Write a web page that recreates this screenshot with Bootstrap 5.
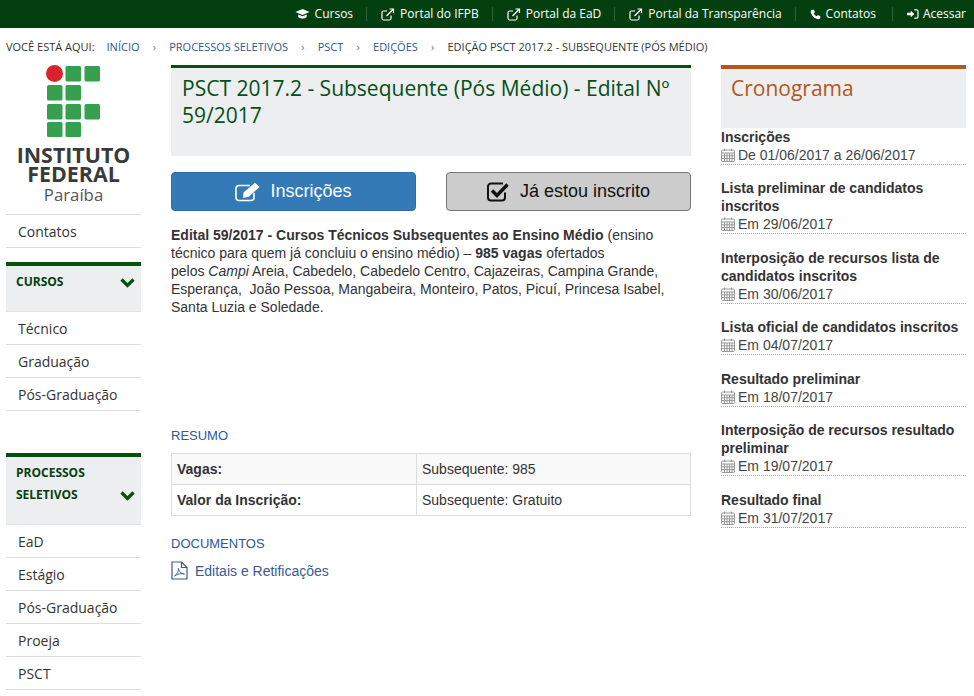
<!DOCTYPE html>
<html lang="pt-BR"><head><meta charset="utf-8"><title>PSCT</title>
<link href="https://cdn.jsdelivr.net/npm/bootstrap@5.3.0/dist/css/bootstrap.min.css" rel="stylesheet">
<style>
html,body{height:696px;overflow:hidden;background:#fff}
body{font-family:"Liberation Sans",Arial,sans-serif;font-size:14px;line-height:18px;color:#333}
.topbar{height:28px;background:#04400f;padding-right:8px}
.topbar a{color:#fff;text-decoration:none;font:12px/14px "Open Sans",sans-serif;padding:0 13px 0 14px;border-right:1px solid #2c6136;display:flex;align-items:center;gap:5px;height:14px}
.topbar a:nth-child(5){padding-right:16px}
.topbar a:last-child{border:0;padding-right:0;padding-left:14px;gap:4px}
.topbar svg{fill:none;stroke:#fff}
.crumbs{height:37px;padding-left:6px;font:11px/37px "Open Sans",sans-serif;color:#333;white-space:nowrap}
.crumbs a{color:#2a5a8c;text-decoration:none}
.crumbs .lbl{margin-right:12px}
.crumbs .sep{color:#777;margin:0 13.200px;font-size:11px}
.frame{padding:0 8px 0 6px;gap:30px}
.lside{width:135px;flex:none}
.mainc{width:520px;flex:none}
.rside{width:245px;flex:none}
.logo{height:149px}
.logo svg{margin-left:40px}
.logo .lg1{font:700 21.4px/19px "Open Sans",sans-serif;color:#3a3a3a;margin-top:8px}
.logo .lg2{font:400 16.800px/20px "Open Sans",sans-serif;color:#555;margin-top:2px}
.sitem{display:block;height:33px;padding-left:12px;border-bottom:1px solid #ddd;color:#333;text-decoration:none;font:14px/34px "Open Sans",sans-serif}
.sitem.first{border-top:1px solid #ddd;height:34px}
.shead{background:#edeeef;border-top:4px solid #04500f;color:#04400f;font:700 12px/22px "Open Sans",sans-serif;padding:5px 6px 0 10px;border-bottom:1px solid #e2e4e4}
.sh1{height:50px;margin-top:14px}
.sh2{height:72px;margin-top:42px}
.chev1{margin-top:6px}
.chev2{margin-top:28px}
.titlebox{height:91px;background:#edeeef;border-top:3px solid #04500f;padding:7px 11px;font:400 21px/27px "Open Sans",sans-serif;color:#04501a;margin:0}
.act{height:39px;width:245px;border-radius:4px;font-size:18px;display:flex;align-items:center;justify-content:center;gap:9px;padding:0}
.act1{background:#337ab7;border:1px solid #2e6da4;color:#fff}
.act2{background:#ccc;border:1px solid #777;color:#111;gap:10px}
.actrow{margin-top:16px}
.intro{margin:15px 0 0}
.lblue{color:#2a5a9c;line-height:18px;font-size:13px}
.lb1{margin-top:111px}
.lb2{margin-top:19px}
.tb{width:520px;font-size:14px;margin:8px 0 0}
.tb td{border:1px solid #ddd;padding:6px 5px;height:31px;line-height:18px;color:#333}
.tb tr:first-child td{background:#f9f9f9}
.tb td:first-child{width:245px;font-weight:700}
.doc{color:#3a5a94;text-decoration:none;gap:7px;margin-top:8px}
.crhead{height:63px;background:#edeeef;border-top:4px solid #b5561c;color:#b5561c;padding:5px 10px;font:400 21px/29px "Open Sans",sans-serif;margin:0}
.ev{border-bottom:1px dotted #aaa;margin-bottom:14.450px}
.ev b{display:block;color:#333}
.ev span{display:flex;align-items:center;gap:3px;color:#444;height:18px}
</style></head><body>
<nav class="topbar d-flex justify-content-end align-items-center">
<a href="#"><svg width="15" height="12" viewBox="0 0 15 12"><path d="M7.500 1 14.500 4 7.500 7 .5 4Z" fill="#fff" stroke="none"/><path d="M3.300 6.500V9C5 11 10 11 11.700 9V6.500L7.500 8.200Z" fill="#fff" stroke="none"/></svg>Cursos</a>
<a href="#"><svg width="14" height="13" viewBox="0 0 14 13" stroke-width="1.200"><path d="M10 7.500V10.500A1.500 1.500 0 0 1 8.500 12H2.500A1.500 1.500 0 0 1 1 10.500V4.500A1.500 1.500 0 0 1 2.500 3H6"/><path d="M5.500 8 12 1.500M8.500 1H12.500V5"/></svg>Portal do IFPB</a>
<a href="#"><svg width="14" height="13" viewBox="0 0 14 13" stroke-width="1.200"><path d="M10 7.500V10.500A1.500 1.500 0 0 1 8.500 12H2.500A1.500 1.500 0 0 1 1 10.500V4.500A1.500 1.500 0 0 1 2.500 3H6"/><path d="M5.500 8 12 1.500M8.500 1H12.500V5"/></svg>Portal da EaD</a>
<a href="#"><svg width="14" height="13" viewBox="0 0 14 13" stroke-width="1.200"><path d="M10 7.500V10.500A1.500 1.500 0 0 1 8.500 12H2.500A1.500 1.500 0 0 1 1 10.500V4.500A1.500 1.500 0 0 1 2.500 3H6"/><path d="M5.500 8 12 1.500M8.500 1H12.500V5"/></svg>Portal da Transparência</a>
<a href="#"><svg width="11" height="11" viewBox="0 0 11 11"><path d="M1.500 1 3.500.5 5 3 3.800 4.300C4.300 5.600 5.400 6.700 6.700 7.200L8 6 10.500 7.500 10 9.500C9.500 10.500 8 10.500 6.500 9.800 4 8.800 2.200 7 1.200 4.500.5 3 .6 1.700 1.500 1Z" fill="#fff" stroke="none"/></svg>Contatos</a>
<a href="#"><svg width="12" height="10" viewBox="0 0 13 11"><path d="M0 4H4V1.800L8 5.500 4 9.200V7H0Z" fill="#fff" stroke="none"/><path d="M8 1H10.500A1.500 1.500 0 0 1 12 2.500V8.500A1.500 1.500 0 0 1 10.500 10H8" stroke-width="1.300"/></svg>Acessar</a>
</nav>
<div class="crumbs"><span class="lbl">VOCÊ ESTÁ AQUI:</span><a href="#">INÍCIO</a><span class="sep">›</span><a href="#">PROCESSOS SELETIVOS</a><span class="sep">›</span><a href="#">PSCT</a><span class="sep">›</span><a href="#">EDIÇÕES</a><span class="sep">›</span>EDIÇÃO PSCT 2017.2 - SUBSEQUENTE (PÓS MÉDIO)</div>
<div class="frame d-flex align-items-start">
<aside class="lside">
<div class="logo text-center">
<svg width="55" height="72" viewBox="0 0 55 72" class="d-block">
<circle cx="8.500" cy="8.500" r="8.500" fill="#d8232a"/>
<g fill="#36a04f"><rect x="19.500" y="1" width="15.500" height="15.500" rx="1.500"/><rect x="38.500" y="1" width="15.500" height="15.500" rx="1.500"/><rect x="1" y="20" width="15.500" height="15.500" rx="1.500"/><rect x="19.500" y="20" width="15.500" height="15.500" rx="1.500"/><rect x="1" y="39" width="15.500" height="15.500" rx="1.500"/><rect x="19.500" y="39" width="15.500" height="15.500" rx="1.500"/><rect x="38.500" y="39" width="15.500" height="15.500" rx="1.500"/><rect x="1" y="57" width="15.500" height="15" rx="1.500"/><rect x="19.500" y="57" width="15.500" height="15" rx="1.500"/></g></svg>
<div class="lg1">INSTITUTO<br>FEDERAL</div><div class="lg2">Paraíba</div>
</div>
<a class="sitem first" href="#">Contatos</a>
<div class="shead sh1 d-flex justify-content-between"><span>CURSOS</span><svg width="15" height="11" viewBox="0 0 15 11" class="chev1"><path d="M1.500 2.500 7.500 8.500 13.500 2.500" fill="none" stroke="#04500f" stroke-width="3.200"/></svg></div>
<a class="sitem" href="#">Técnico</a><a class="sitem" href="#">Graduação</a><a class="sitem" href="#">Pós-Graduação</a>
<div class="shead sh2 d-flex justify-content-between"><span>PROCESSOS<br>SELETIVOS</span><svg width="15" height="11" viewBox="0 0 15 11" class="chev2"><path d="M1.500 2.500 7.500 8.500 13.500 2.500" fill="none" stroke="#04500f" stroke-width="3.200"/></svg></div>
<a class="sitem" href="#">EaD</a><a class="sitem" href="#">Estágio</a><a class="sitem" href="#">Pós-Graduação</a><a class="sitem" href="#">Proeja</a><a class="sitem" href="#">PSCT</a>
</aside>
<main class="mainc">
<h1 class="titlebox">PSCT 2017.2 - Subsequente (Pós Médio) - Edital Nº 59/2017</h1>
<div class="actrow d-flex justify-content-between">
<a class="btn act act1" href="#"><svg width="26" height="20" viewBox="0 0 26 20" fill="none" stroke="#fff" stroke-width="1.600"><path d="M19 11V15.500A3 3 0 0 1 16 18.500H4A3 3 0 0 1 1 15.500V6.500A3 3 0 0 1 4 3.500H15"/><path d="M8.500 10.500 20 .8 24.500 5 13.500 15 8 15.800Z" fill="#fff" stroke="none"/></svg>Inscrições</a>
<a class="btn act act2" href="#"><svg width="23" height="21" viewBox="0 0 23 21" fill="none" stroke="#111" stroke-width="2"><path d="M18 11.500V16.500A3 3 0 0 1 15 19.500H4A3 3 0 0 1 1 16.500V5.500A3 3 0 0 1 4 2.500H16"/><path d="M5 9.500 10 14.500 20.500 3.500" stroke-width="3.400"/></svg>Já estou inscrito</a>
</div>
<p class="intro"><b>Edital 59/2017 - Cursos Técnicos Subsequentes ao Ensino Médio</b> (ensino<br>técnico para quem já concluiu o ensino médio) – <b>985 vagas</b> ofertados<br>pelos <i>Campi</i> Areia, Cabedelo, Cabedelo Centro, Cajazeiras, Campina Grande,<br>Esperança,&nbsp; João Pessoa, Mangabeira, Monteiro, Patos, Picuí, Princesa Isabel,<br>Santa Luzia e Soledade.</p>
<div class="lblue lb1">RESUMO</div>
<table class="tb"><tbody><tr><td>Vagas:</td><td>Subsequente: 985</td></tr><tr><td>Valor da Inscrição:</td><td>Subsequente: Gratuito</td></tr></tbody></table>
<div class="lblue lb2">DOCUMENTOS</div>
<a class="doc d-flex align-items-center" href="#"><svg width="17" height="19" viewBox="0 0 17 19" fill="none" stroke="#3a5a94" stroke-width="1.200"><path d="M1 1H10.500L16 6.500V18H1ZM10.500 1V6.500H16"/><path d="M3.500 15C6 13.500 8 9.500 7.500 7 7 9.500 10 13 13.500 13 11 12 6 13 3.500 15Z" stroke-width=".9"/></svg>Editais e Retificações</a>
</main>
<aside class="rside">
<h2 class="crhead">Cronograma</h2>
<div class="ev"><b>Inscrições</b><span><svg width="14" height="14" viewBox="0 0 14 14"><use href="#cal"/></svg>De 01/06/2017 a 26/06/2017</span></div>
<div class="ev"><b>Lista preliminar de candidatos inscritos</b><span><svg width="14" height="14" viewBox="0 0 14 14"><use href="#cal"/></svg>Em 29/06/2017</span></div>
<div class="ev"><b>Interposição de recursos lista de candidatos inscritos</b><span><svg width="14" height="14" viewBox="0 0 14 14"><use href="#cal"/></svg>Em 30/06/2017</span></div>
<div class="ev"><b>Lista oficial de candidatos inscritos</b><span><svg width="14" height="14" viewBox="0 0 14 14"><use href="#cal"/></svg>Em 04/07/2017</span></div>
<div class="ev"><b>Resultado preliminar</b><span><svg width="14" height="14" viewBox="0 0 14 14"><use href="#cal"/></svg>Em 18/07/2017</span></div>
<div class="ev"><b>Interposição de recursos resultado preliminar</b><span><svg width="14" height="14" viewBox="0 0 14 14"><use href="#cal"/></svg>Em 19/07/2017</span></div>
<div class="ev"><b>Resultado final</b><span><svg width="14" height="14" viewBox="0 0 14 14"><use href="#cal"/></svg>Em 31/07/2017</span></div>
</aside>
</div>
<svg width="0" height="0" class="position-absolute"><defs><g id="cal" fill="none" stroke="#999" stroke-width="1"><rect x=".5" y="2" width="13" height="11.500" rx="1"/><path d="M.5 5H13.500M.5 7.800H13.500M.5 10.600H13.500M3.500 5V13.500M6 5V13.500M8.500 5V13.500M11 5V13.500M3.500 .5V3M10.500 .5V3"/></g></defs></svg>
</body></html>
